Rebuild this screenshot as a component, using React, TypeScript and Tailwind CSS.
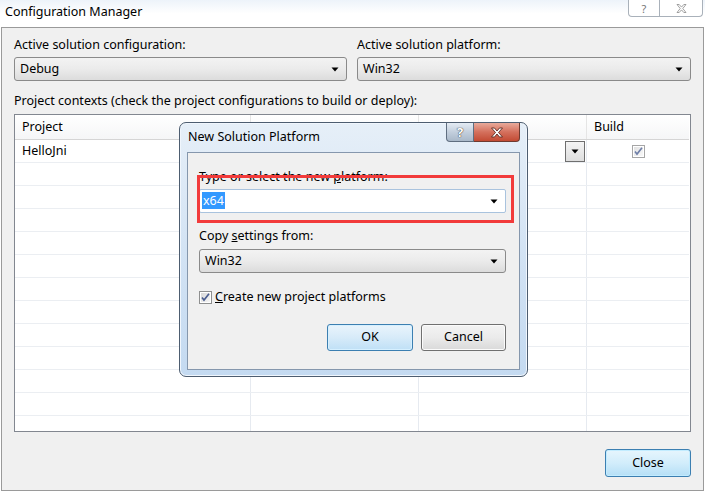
import React from "react";

function Arrow() {
  return (
    <svg width="8" height="5" viewBox="0 0 8 5" className="shrink-0">
      <path d="M0.5 0.5h7l-3.5 4z" fill="#000" />
    </svg>
  );
}

function Combo({ value, editable }: { value: React.ReactNode; editable?: boolean }) {
  return (
    <div
      className={
        editable
          ? "flex h-[24px] items-center justify-between rounded-[2px] border border-[#a9c3de] bg-white pl-[2px] pr-[7px]"
          : "flex h-[24px] items-center justify-between rounded-[3px] border border-[#8a8a8a] bg-gradient-to-b from-[#f3f3f3] via-[#ebebeb] to-[#dcdcdc] pl-[5px] pr-[7px]"
      }
    >
      <span className="leading-[16px]">{value}</span>
      <Arrow />
    </div>
  );
}

function Check({ dim }: { dim?: boolean }) {
  return (
    <svg width="13" height="13" viewBox="0 0 13 13" className="shrink-0">
      <defs>
        <linearGradient id={dim ? "cbd" : "cb"} x1="0" y1="0" x2="1" y2="1">
          <stop offset="0" stopColor={dim ? "#e2e2e2" : "#d8d8d8"} />
          <stop offset="1" stopColor={dim ? "#f8f8f8" : "#f6f6f6"} />
        </linearGradient>
      </defs>
      <rect x="0.5" y="0.5" width="12" height="12" fill="#fff" stroke={dim ? "#a6a6a6" : "#8e8f8f"} />
      <rect x="2" y="2" width="9" height="9" fill={`url(#${dim ? "cbd" : "cb"})`} />
      <path d="M3 6.5l2 2.6L10 2.8" fill="none" stroke={dim ? "#6f7fa8" : "#4a5d8f"} strokeWidth="1.6" />
    </svg>
  );
}

const ROWS = 13;

export default function App() {
  return (
    <div className="relative h-[495px] w-[705px] overflow-hidden bg-white font-['Noto_Sans','DejaVu_Sans',sans-serif] text-[12.5px] text-black">
      {/* title bar */}
      <div className="flex h-[27px] items-start justify-between bg-gradient-to-b from-[#edf3fa] via-white to-white">
        <div className="pl-[5px] pt-[3px] text-[12.5px] leading-[18px]">Configuration Manager</div>
        <div className="mr-[2px] flex h-[17px]">
          <div className="flex w-[32px] items-center justify-center rounded-bl-[4px] border border-t-0 border-[#a9b1ba] bg-white text-[11px] leading-none text-[#777]">
            ?
          </div>
          <div className="flex w-[43px] items-center justify-center rounded-br-[4px] border border-l-0 border-t-0 border-[#a9b1ba] bg-white">
            <svg width="11" height="9" viewBox="0 0 11 9">
              <path d="M1 0.5h2.2l2.3 2.6 2.3-2.6H10L6.8 4.5 10 8.5H7.8L5.5 5.9 3.2 8.5H1l3.2-4z" fill="none" stroke="#8a8a8a" strokeWidth="0.8" />
            </svg>
          </div>
        </div>
      </div>

      {/* client area */}
      <div className="ml-[1px] h-[464px] w-[703px] border border-[#9a9a9a] bg-[#f0f0f0] px-[12px] pt-[9px]">
        <div className="flex gap-[10px]">
          <div className="flex w-[333px] flex-col gap-[4px]">
            <div className="leading-[16px]">Active solution configuration:</div>
            <Combo value="Debug" />
          </div>
          <div className="flex flex-1 flex-col gap-[4px]">
            <div className="leading-[16px]">Active solution platform:</div>
            <Combo value="Win32" />
          </div>
        </div>
        <div className="mt-[12px] leading-[16px]">
          Project contexts (check the project configurations to build or deploy):
        </div>

        {/* table */}
        <div className="mt-[5px] h-[318px] overflow-hidden border border-[#828790] bg-white pr-[1px]">
          <div className="grid h-[25px] grid-cols-[236px_168px_168px_1fr] border-b border-[#d5d5d5] bg-gradient-to-b from-white to-[#f5f6f7]">
            <div className="flex items-center border-r border-[#e5e5e5] pl-[7px]">Project</div>
            <div className="border-r border-[#e5e5e5]" />
            <div className="border-r border-[#e5e5e5]" />
            <div className="flex items-center pl-[7px]">Build</div>
          </div>
          {Array.from({ length: ROWS }).map((_, i) => (
            <div key={i} className="grid h-[23px] grid-cols-[236px_168px_168px_1fr] border-b border-[#ebeef2]">
              <div className="flex items-center border-r border-[#e6eaf0] pl-[7px]">{i === 0 ? "HelloJni" : ""}</div>
              <div className="border-r border-[#e6eaf0]" />
              <div className="flex items-center justify-end border-r border-[#e6eaf0] pr-[1px]">
                {i === 0 ? (
                  <div className="flex h-[21px] w-[20px] items-center justify-center border border-[#6f6f6f] bg-gradient-to-b from-[#f4f4f4] to-[#dedede]">
                    <Arrow />
                  </div>
                ) : null}
              </div>
              <div className="flex items-center justify-center">{i === 0 ? <Check dim /> : null}</div>
            </div>
          ))}
        </div>

        <div className="mt-[17px] flex justify-end">
          <div className="flex h-[28px] w-[86px] items-center justify-center rounded-[3px] border border-[#3c7fb1] bg-gradient-to-b from-[#e6f5fd] via-[#d2edfb] to-[#b5dff6] shadow-[inset_0_0_0_1px_#c2ecff]">
            Close
          </div>
        </div>
      </div>

      {/* dialog */}
      <div className="absolute left-[179px] top-[122px] flex h-[255px] w-[349px] flex-col rounded-[7px] border border-[#4d5d70] bg-gradient-to-b from-[#e6eff8] via-[#d3e3f4] to-[#c4daf1] shadow-[inset_0_0_0_1px_#f0f6fd]">
        <div className="flex h-[28px] items-start justify-between pl-[8px] pr-[7px]">
          <div className="pt-[6px] leading-[16px]">New Solution Platform</div>
          <div className="flex h-[19px]">
            <div className="flex w-[28px] items-center justify-center rounded-bl-[4px] border border-t-0 border-[#5f6e80] bg-gradient-to-b from-[#e4ebf3] via-[#c3cfdd] to-[#a9b8c9] text-[13px] font-bold leading-none text-white [text-shadow:0_0_1px_#333,0_0_1px_#333]">
              ?
            </div>
            <div className="flex w-[46px] items-center justify-center rounded-br-[4px] border border-l-0 border-t-0 border-[#6e3a30] bg-gradient-to-b from-[#e8aa9b] via-[#d4705d] to-[#c24a33]">
              <svg width="14" height="11" viewBox="0 0 14 11">
                <path d="M1.5 1h3l2.5 3 2.5-3h3l-4 4.5 4 4.5h-3L7 7 4.5 10h-3l4-4.5z" fill="#fff" stroke="#5a2a22" strokeWidth="0.9" />
              </svg>
            </div>
          </div>
        </div>
        <div className="mx-[7px] mt-[1px] flex h-[218px] flex-col border border-[#8597ad] bg-[#f0f0f0] pl-[11px] pr-[13px] pt-[16px]">
          <div className="leading-[16px]">
            Type or select the new <span className="underline">p</span>latform:
          </div>
          <div className="mt-[4px]">
            <Combo editable value={<span className="bg-[#3399ff] px-[1px] text-white">x64</span>} />
          </div>
          <div className="mt-[15px] leading-[16px]">
            Copy <span className="underline">s</span>ettings from:
          </div>
          <div className="mt-[5px]">
            <Combo value="Win32" />
          </div>
          <div className="mt-[16px] flex items-center gap-[3px] leading-[16px]">
            <Check />
            <span>
              <span className="underline">C</span>reate new project platforms
            </span>
          </div>
          <div className="mt-[19px] flex justify-end gap-[8px]">
            <div className="flex h-[27px] w-[86px] items-center justify-center rounded-[3px] border border-[#3c7fb1] bg-gradient-to-b from-[#e9f4fc] via-[#d7ebf9] to-[#bfe0f6] shadow-[inset_0_0_0_1px_#d6f0ff]">
              OK
            </div>
            <div className="flex h-[27px] w-[85px] items-center justify-center rounded-[3px] border border-[#707070] bg-gradient-to-b from-[#f3f3f3] via-[#ebebeb] to-[#d9d9d9] shadow-[inset_0_0_0_1px_#fbfbfb]">
              Cancel
            </div>
          </div>
        </div>
      </div>

      {/* red highlight box */}
      <div className="absolute left-[197px] top-[175px] h-[48px] w-[317px] border-[3px] border-[#f23b3b]" />
    </div>
  );
}
